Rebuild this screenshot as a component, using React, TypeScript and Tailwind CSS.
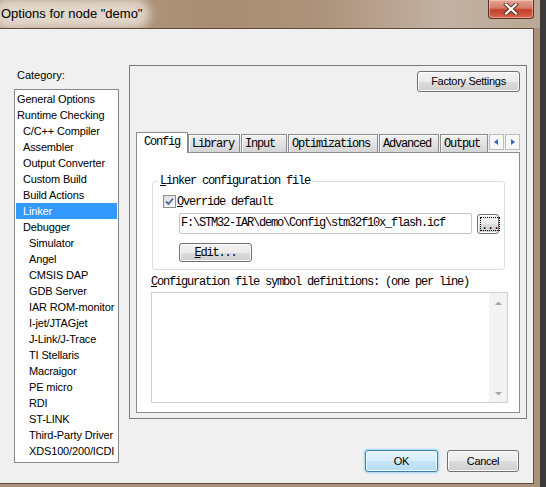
import React from "react";

// category tree: [label, depth]
const categories: [string, number][] = [
  ["General Options", 0],
  ["Runtime Checking", 0],
  ["C/C++ Compiler", 1],
  ["Assembler", 1],
  ["Output Converter", 1],
  ["Custom Build", 1],
  ["Build Actions", 1],
  ["Linker", 1],
  ["Debugger", 1],
  ["Simulator", 2],
  ["Angel", 2],
  ["CMSIS DAP", 2],
  ["GDB Server", 2],
  ["IAR ROM-monitor", 2],
  ["I-jet/JTAGjet", 2],
  ["J-Link/J-Trace", 2],
  ["TI Stellaris", 2],
  ["Macraigor", 2],
  ["PE micro", 2],
  ["RDI", 2],
  ["ST-LINK", 2],
  ["Third-Party Driver", 2],
  ["XDS100/200/ICDI", 2],
];
const indent = ["pl-[1px]", "pl-[7px]", "pl-[13px]"];

const tabs: [string, string][] = [
  ["Library", "w-[52px]"],
  ["Input", "w-[46px] ml-[1px]"],
  ["Optimizations", "w-[90px] ml-[1px]"],
  ["Advanced", "w-[60px] ml-[1px]"],
  ["Output", "w-[48px] ml-[1px]"],
];

const mono = "font-['Liberation_Mono',monospace] text-[12px] leading-[12px] tracking-[-1.2px]";
const btn =
  "rounded-[3px] border border-[#707070] bg-[linear-gradient(#f2f2f2_0%,#ebebeb_50%,#dddddd_50%,#cfcfcf_100%)] shadow-[inset_0_0_0_1px_#fbfbfb]";

function Arrow({ dir }: { dir: "left" | "right" | "up" | "down" }) {
  const pts = {
    left: "5,1 5,7 1,4",
    right: "2,1 2,7 6,4",
    up: "0,4 7,4 3.5,0.5",
    down: "0,0 7,0 3.5,3.5",
  }[dir];
  const vertical = dir === "up" || dir === "down";
  return (
    <svg width={7} height={vertical ? 4 : 8}>
      <polygon points={pts} fill={vertical ? "#a6a6a6" : "#3d64c8"} />
    </svg>
  );
}

export default function App() {
  return (
    <div className="flex h-[487px] w-[546px] overflow-hidden bg-[#3b3b3b] font-['Liberation_Sans',Arial,sans-serif] text-black">
      <div className="flex h-full w-[540px] flex-col bg-[#aa917a]">
        {/* caption bar */}
        <div className="flex h-[28px] items-start bg-[linear-gradient(90deg,#b49c85_0%,#a88d72_40%,#ad937b_60%,#c2b2a3_82%,#bba896_100%)]">
          <span className="ml-[1px] mt-[7px] rounded-full bg-[rgba(238,229,220,0.8)] text-[13px] leading-[14px] shadow-[0_0_10px_8px_rgba(238,229,220,0.8)]">
            Options for node "demo"
          </span>
          <div className="ml-auto mr-[6px] flex h-[19px] w-[46px] items-center justify-center rounded-b-[4px] border border-t-0 border-[#5a2f26] bg-[linear-gradient(#e3a597_0%,#d37b66_45%,#c2412a_55%,#d6664b_100%)] shadow-[inset_0_0_0_1px_rgba(255,220,210,0.5)]">
            <svg width="16" height="12" viewBox="0 0 16 12">
              <path d="M3 1.5 L13 10.5 M13 1.5 L3 10.5" stroke="#5a2a22" strokeWidth="4" strokeLinecap="square" />
              <path d="M3 1.5 L13 10.5 M13 1.5 L3 10.5" stroke="#ffffff" strokeWidth="2.2" strokeLinecap="square" />
            </svg>
          </div>
        </div>

        {/* client area */}
        <div className="flex h-[456px] w-[534px] border-y border-r border-[#5e4d3f] bg-[#f0f0f0] text-[11px]">
          {/* category column */}
          <div className="flex flex-col pl-[14px]">
            <div className="mt-[38px] h-[16px] pl-[3px] leading-[16px]">Category:</div>
            <div className="mt-[6px] h-[374px] w-[105px] border border-[#828790] bg-white px-[1px] pt-[1px] tracking-[-0.15px]">
              {categories.map(([label, depth]) => (
                <div
                  key={label}
                  className={`h-[16px] whitespace-nowrap leading-[16px] ${indent[depth]} ${
                    label === "Linker" ? "bg-[#3399ff] text-white" : ""
                  }`}
                >
                  {label}
                </div>
              ))}
            </div>
          </div>

          {/* options column */}
          <div className="ml-[10px] mt-[36px] flex w-[398px] flex-col">
            <div className="flex h-[354px] flex-col border border-[#7d7d7d] px-[6px] pb-[5px] pt-[5px]">
              <div className="flex justify-end">
                <button className={`${btn} h-[21px] w-[103px] text-[11px] tracking-[-0.3px]`}>Factory Settings</button>
              </div>

              {/* tab strip */}
              <div className={`mt-[40px] flex h-[20px] items-end ${mono}`}>
                <div className="relative z-10 mb-[-1px] h-[21px] w-[52px] border border-b-0 border-[#898c95] bg-white pl-[7px] pt-[3px]">
                  Config
                </div>
                {tabs.map(([label, w]) => (
                  <div
                    key={label}
                    className={`h-[18px] ${w} border border-b-0 border-[#898c95] bg-[linear-gradient(#f1f1f1,#d4d4d4)] pl-[3px] pt-[3px] shadow-[inset_1px_1px_0_#fafafa]`}
                  >
                    {label}
                  </div>
                ))}
                <div className="mb-[2px] ml-[1px] flex gap-[1px]">
                  <div className="flex h-[16px] w-[15px] items-center justify-center border border-[#b9bcc2] bg-[#f7f7f7]">
                    <Arrow dir="left" />
                  </div>
                  <div className="flex h-[16px] w-[15px] items-center justify-center border border-[#b9bcc2] bg-[#f7f7f7]">
                    <Arrow dir="right" />
                  </div>
                </div>
              </div>

              {/* Config page */}
              <div className={`flex h-[261px] flex-col border border-[#898c95] bg-white ${mono}`}>
                <div className="ml-[15px] mr-[14px] mt-[28px] rounded-[3px] border border-[#d5dfe5] pb-[7px]">
                  <div className="ml-[5px] mt-[-7px] h-[13px] w-fit bg-white px-[2px] leading-[13px]">
                    <u>L</u>inker configuration file
                  </div>
                  <div className="ml-[10px] mt-[7px] flex h-[13px] items-center">
                    <div className="flex h-[13px] w-[13px] items-center justify-center border border-[#8e8f8f] bg-[linear-gradient(135deg,#dcdcdc,#fbfbfb)]">
                      <svg width="9" height="9" viewBox="0 0 9 9">
                        <path d="M1 4.5 L3.5 7 L8 1.5" fill="none" stroke="#4a6aa5" strokeWidth="1.8" />
                      </svg>
                    </div>
                    <span className="ml-[1px]">
                      <u>O</u>verride default
                    </span>
                  </div>
                  <div className="ml-[26px] mt-[5px] flex items-start">
                    <div className="h-[21px] w-[293px] whitespace-nowrap rounded-[2px] border border-[#c2c6cc] pl-[1px] pt-[3px]">
                      F:\STM32-IAR\demo\Config\stm32f10x_flash.icf
                    </div>
                    <div className={`${btn} ml-[5px] mt-[1px] flex h-[20px] w-[22px] p-[2px]`}>
                      <div className="flex flex-1 items-end justify-center border border-dotted border-black leading-[8px]">
                        ...
                      </div>
                    </div>
                  </div>
                  <div className={`${btn} ml-[26px] mt-[9px] flex h-[19px] w-[73px] items-center justify-center`}>
                    <span>
                      <u>E</u>dit...
                    </span>
                  </div>
                </div>

                <div className="ml-[14px] mt-[6px]">
                  <u>C</u>onfiguration file symbol definitions: (one per line)
                </div>
                <div className="ml-[14px] mt-[4px] flex h-[111px] w-[357px] justify-end border border-[#c9d1d9] bg-white">
                  <div className="flex w-[18px] flex-col items-center justify-between bg-[#f3f3f3] pb-[6px] pt-[8px]">
                    <Arrow dir="up" />
                    <Arrow dir="down" />
                  </div>
                </div>
              </div>
            </div>

            {/* dialog buttons */}
            <div className="mt-[31px] flex justify-end gap-[9px] pr-[8px] text-[11px] tracking-[-0.3px]">
              <button className="h-[22px] w-[73px] rounded-[3px] border border-[#3c7fb1] bg-[linear-gradient(#e6f4fc_0%,#d6edfa_50%,#c5e5f7_50%,#b5ddf4_100%)] shadow-[0_0_2px_1px_#9bd5f5,inset_0_0_0_1px_#f4fbff]">
                OK
              </button>
              <button className={`${btn} h-[22px] w-[72px]`}>Cancel</button>
            </div>
          </div>
        </div>
      </div>
    </div>
  );
}
